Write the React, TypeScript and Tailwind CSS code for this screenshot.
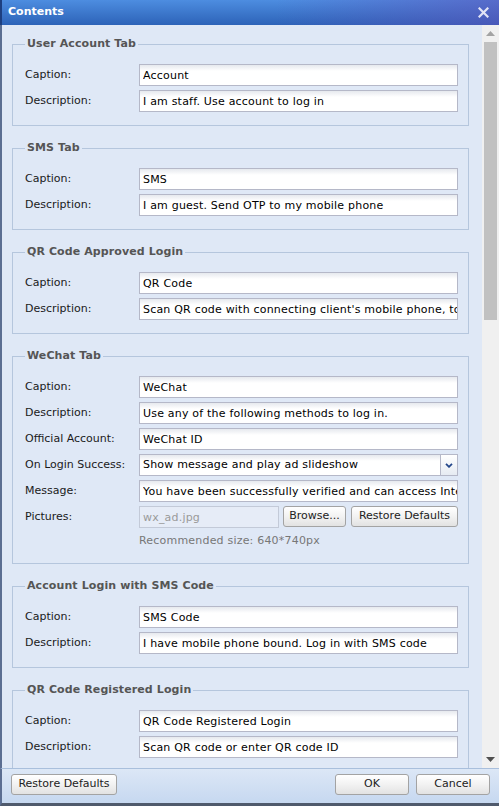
import React from "react";

const F = { fontFamily: '"DejaVu Sans", Verdana, Tahoma, sans-serif' };

function TextInput({ value }: { value: string }) {
  return (
    <input
      readOnly
      value={value}
      className="h-[22px] w-full min-w-0 border border-[#b5b8c8] bg-[linear-gradient(to_bottom,#e6e9ee,#ffffff_6px)] pl-[3px] text-[11px] tracking-[0.2px] text-black outline-none"
      style={F}
    />
  );
}

function Row({ label, children }: { label: string; children: React.ReactNode }) {
  return (
    <div className="flex items-center h-[22px]">
      <div className="w-[114px] shrink-0 text-[11px] text-[#1a1a1a] whitespace-nowrap">{label}</div>
      <div className="flex-1 min-w-0 flex">{children}</div>
    </div>
  );
}

function Field({ legend, children }: { legend: string; children: React.ReactNode }) {
  return (
    <fieldset className="border border-[#b5c6dd] pl-[12px] pr-[10px] pt-[13px] pb-[13px] mb-[15px]">
      <legend className="px-[2px] text-[11px] leading-[14px] font-bold text-[#555] tracking-[0.1px]">{legend}</legend>
      <div className="flex flex-col gap-[4px]">{children}</div>
    </fieldset>
  );
}

function Btn({ children, w }: { children: React.ReactNode; w: string }) {
  return (
    <button
      className={`${w} h-[21px] shrink-0 rounded-[3px] border border-[#a3a3a3] bg-[linear-gradient(to_bottom,#ffffff,#f2f2f2_50%,#e2e2e2)] text-[11px] text-[#222]`}
      style={F}
    >
      {children}
    </button>
  );
}

export default function App() {
  return (
    <div className="w-[499px] h-[806px] flex flex-col overflow-hidden bg-[#dfe8f6]" style={F}>
      {/* Title bar */}
      <div className="h-[25px] shrink-0 flex items-center pl-[6px] pr-[10px] border-l-2 border-[#1d3f80] bg-[linear-gradient(to_right,rgba(0,0,0,0)_55%,rgba(95,80,185,0.55)),linear-gradient(to_bottom,#4d8de0,#2d63b8)]">
        <div className="w-full flex items-center justify-between">
          <span className="text-[11px] font-bold text-white">Contents</span>
          <svg width="11" height="11" viewBox="0 0 11 11">
            <path d="M1.5 1.5 L9.5 9.5 M9.5 1.5 L1.5 9.5" stroke="#e2e4f6" strokeWidth="2.2" strokeLinecap="square" />
          </svg>
        </div>
      </div>

      {/* Body */}
      <div className="flex-1 min-h-0 flex border-l-2 border-[#5b6e92]">
        <div className="flex-1 min-w-0 overflow-hidden pl-[10px] pr-[13px] pt-[12px]">
          <Field legend="User Account Tab">
            <Row label="Caption:"><TextInput value="Account" /></Row>
            <Row label="Description:"><TextInput value="I am staff. Use account to log in" /></Row>
          </Field>
          <Field legend="SMS Tab">
            <Row label="Caption:"><TextInput value="SMS" /></Row>
            <Row label="Description:"><TextInput value="I am guest. Send OTP to my mobile phone" /></Row>
          </Field>
          <Field legend="QR Code Approved Login">
            <Row label="Caption:"><TextInput value="QR Code" /></Row>
            <Row label="Description:"><TextInput value="Scan QR code with connecting client's mobile phone, to log in" /></Row>
          </Field>
          <Field legend="WeChat Tab">
            <Row label="Caption:"><TextInput value="WeChat" /></Row>
            <Row label="Description:"><TextInput value="Use any of the following methods to log in." /></Row>
            <Row label="Official Account:"><TextInput value="WeChat ID" /></Row>
            <Row label="On Login Success:">
              <div className="h-[22px] w-full flex border border-[#b5b8c8] bg-[linear-gradient(to_bottom,#e6e9ee,#ffffff_6px)]">
                <div className="flex-1 pl-[3px] flex items-center text-[11px] tracking-[0.2px] text-black whitespace-nowrap overflow-hidden">
                  Show message and play ad slideshow
                </div>
                <div className="w-[17px] shrink-0 border-l border-[#b5b8c8] bg-[linear-gradient(to_bottom,#ffffff,#e6ebf2)] flex items-center justify-center">
                  <svg width="8" height="5" viewBox="0 0 8 5">
                    <path d="M1 0.8 L4 3.8 L7 0.8" stroke="#23468a" strokeWidth="1.8" fill="none" />
                  </svg>
                </div>
              </div>
            </Row>
            <Row label="Message:"><TextInput value="You have been successfully verified and can access Internet now." /></Row>
            <Row label="Pictures:">
              <div className="flex w-full gap-[4px]">
                <input
                  readOnly
                  value="wx_ad.jpg"
                  className="h-[22px] w-[140px] shrink-0 border border-[#c3cad8] bg-[#e6ecf7] pl-[3px] text-[11px] tracking-[0.2px] text-[#9a9a9a] outline-none"
                  style={F}
                />
                <Btn w="w-[63px]">Browse...</Btn>
                <Btn w="w-[107px] ml-[1px]">Restore Defaults</Btn>
              </div>
            </Row>
            <div className="pl-[114px] pt-[1px] pb-[2px] text-[11px] leading-[15px] tracking-[0.2px] text-[#777]">Recommended size: 640*740px</div>
          </Field>
          <Field legend="Account Login with SMS Code">
            <Row label="Caption:"><TextInput value="SMS Code" /></Row>
            <Row label="Description:"><TextInput value="I have mobile phone bound. Log in with SMS code" /></Row>
          </Field>
          <Field legend="QR Code Registered Login">
            <Row label="Caption:"><TextInput value="QR Code Registered Login" /></Row>
            <Row label="Description:"><TextInput value="Scan QR code or enter QR code ID" /></Row>
          </Field>
        </div>

        {/* Scrollbar */}
        <div className="w-[17px] shrink-0 bg-[#f0f0f0] flex flex-col items-center">
          <div className="h-[17px] w-full flex items-center justify-center">
            <svg width="9" height="5" viewBox="0 0 9 5"><path d="M0 5 L4.5 0 L9 5 Z" fill="#a3a3a3" /></svg>
          </div>
          <div className="w-[13px] h-[278px] bg-[#c1c1c1]" />
          <div className="flex-1" />
          <div className="h-[17px] w-full flex items-center justify-center">
            <svg width="9" height="5" viewBox="0 0 9 5"><path d="M0 0 L9 0 L4.5 5 Z" fill="#505050" /></svg>
          </div>
        </div>
      </div>

      {/* Footer */}
      <div className="h-[38px] shrink-0 flex items-center justify-between pl-[9px] pr-[9px] pb-[3px] border-t border-[#a9bfdc] border-l-2 border-l-[#5b6e92] border-b-[3px] border-b-[#4f5a6c] bg-[linear-gradient(to_bottom,#dce7f6,#c6d8f0)]">
        <Btn w="w-[106px]">Restore Defaults</Btn>
        <div className="flex gap-[7px]">
          <Btn w="w-[74px]">OK</Btn>
          <Btn w="w-[74px]">Cancel</Btn>
        </div>
      </div>
    </div>
  );
}
